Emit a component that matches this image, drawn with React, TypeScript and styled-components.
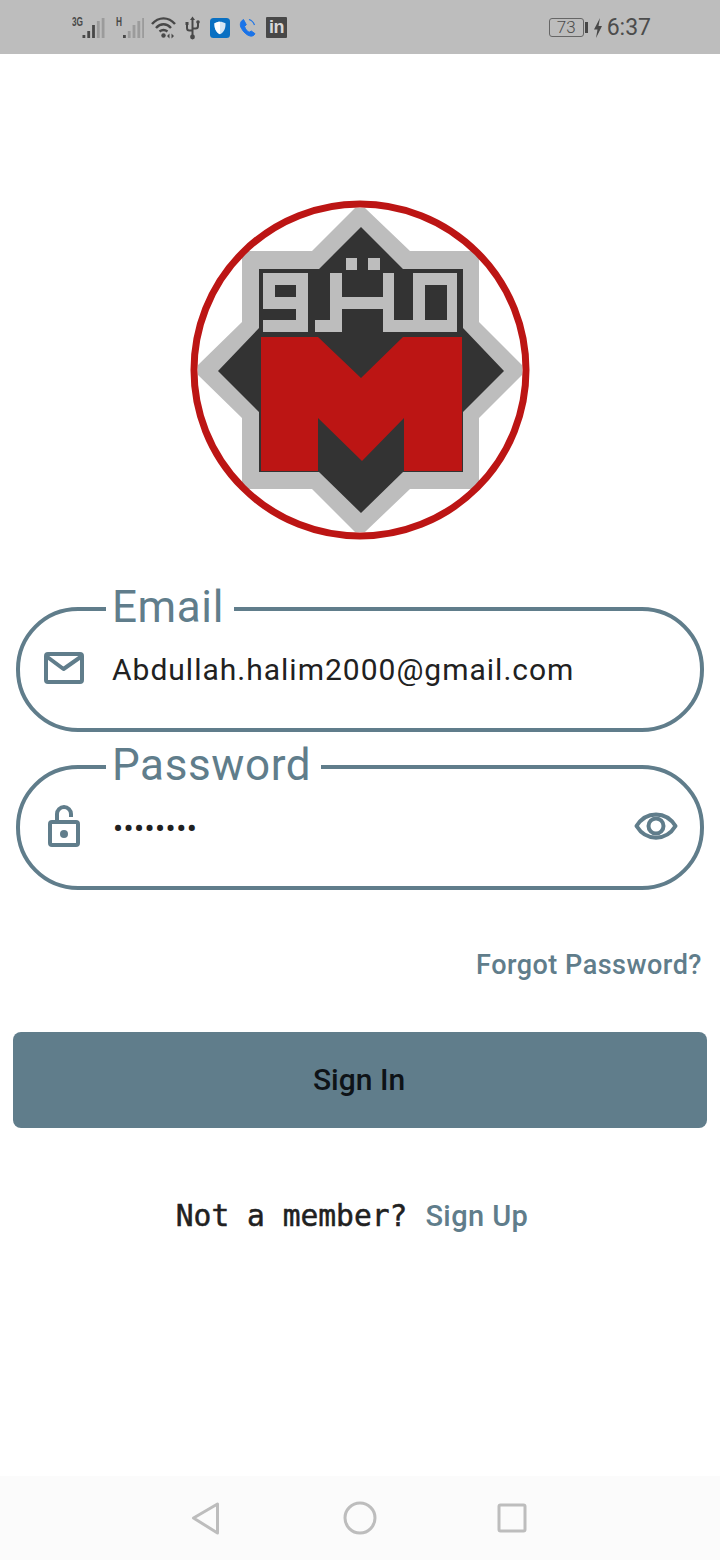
import styled, { createGlobalStyle } from 'styled-components'

const GlobalStyle = createGlobalStyle`
  html, body {
    margin: 0;
    padding: 0;
    background: #fff;
  }
  * {
    box-sizing: border-box;
  }
`

const Page = styled.div`
  width: 720px;
  height: 1560px;
  display: flex;
  flex-direction: column;
  overflow: hidden;
  background: #fff;
  font-family: Roboto, sans-serif;
`

const StatusBar = styled.header`
  height: 54px;
  flex: none;
  display: flex;
  align-items: center;
  justify-content: space-between;
  padding: 1px 69px 0 72px;
  background: #bdbdbd;
`

const StatusGroup = styled.div`
  display: flex;
  align-items: center;
  gap: 7px;
`

const StatusIcon = styled.svg`
  display: block;
  flex: none;
`

const LinkedIn = styled.span`
  width: 21px;
  height: 21px;
  display: flex;
  align-items: center;
  justify-content: center;
  border-radius: 1px;
  background: #484848;
  color: #d8d8d8;
  font-family: 'Liberation Sans', sans-serif;
  font-size: 18px;
  font-weight: 700;
  line-height: 23px;
  letter-spacing: -0.5px;
`

const Power = styled.div`
  display: flex;
  align-items: center;
`

const Battery = styled.span`
  width: 35px;
  height: 19px;
  display: flex;
  align-items: center;
  justify-content: center;
  border: 1.5px solid #666;
  border-radius: 3px;
  color: #4c4c4c;
  font-size: 17px;
  font-weight: 300;
  line-height: 1;
`

const BatteryNub = styled.span`
  width: 3px;
  height: 11px;
  margin: 0 6px 0 1px;
  background: #484848;
`

const Time = styled.span`
  margin-left: 5px;
  color: #4c4c4c;
  font-size: 23px;
  line-height: 28px;
`

const Logo = styled.svg`
  display: block;
  flex: none;
  margin: 136px auto 35px;
`

const Field = styled.fieldset`
  margin: 0 16px 11px;
  padding: 0 22px 24px 24px;
  min-width: 0;
  border: 4px solid #607d8b;
  border-radius: 62px;
`

const Label = styled.legend`
  margin-left: 62px;
  padding: 0 10px 3px 6px;
  color: #607d8b;
  font-size: 44px;
  line-height: 44px;
  letter-spacing: 0.6px;
`

const FieldRow = styled.div`
  height: 72px;
  display: flex;
  align-items: center;
`

const FieldIcon = styled.svg`
  display: block;
  flex: none;
  margin-right: 28px;
`

const Value = styled.span`
  flex: 1;
  padding-top: 4px;
  color: #212121;
  font-size: 30px;
  line-height: 40px;
  letter-spacing: 1px;
`

const Secret = styled(Value)`
  margin-left: 1px;
  padding-top: 6px;
  letter-spacing: 0.4px;
`

const EyeIcon = styled.svg`
  display: block;
  flex: none;
`

const Forgot = styled.a`
  align-self: flex-end;
  margin: 48px 18px 0 0;
  color: #607d8b;
  font-size: 27px;
  font-weight: 500;
  line-height: 32px;
  letter-spacing: 0.5px;
`

const SignInButton = styled.button`
  height: 96px;
  flex: none;
  margin: 51px 13px 0;
  padding: 0 2px 2px 0;
  border: 0;
  border-radius: 8px;
  background: #607d8b;
  color: #0e1317;
  font-family: Roboto, sans-serif;
  font-size: 30px;
  font-weight: 500;
`

const Footer = styled.div`
  height: 40px;
  flex: none;
  margin-top: 68px;
  padding-right: 16px;
  display: flex;
  align-items: center;
  justify-content: center;
  gap: 18px;
`

const Question = styled.span`
  color: #212121;
  font-family: 'DejaVu Sans Mono', monospace;
  font-size: 29.6px;
  -webkit-text-stroke: 0.5px #212121;
`

const SignUp = styled.a`
  color: #607d8b;
  font-size: 29px;
  font-weight: 500;
  letter-spacing: 0.4px;
`

const NavBar = styled.nav`
  height: 84px;
  flex: none;
  margin-top: auto;
  display: flex;
  align-items: center;
  justify-content: center;
  gap: 116px;
  background: #fbfbfb;
`

const NavIcon = styled.svg`
  display: block;
  fill: none;
  stroke: #bdbdbd;
  stroke-width: 3;
  stroke-linejoin: round;
`

function SignalIcon({ label, width, labelX, start, dark }: { label: string; width: number; labelX: number; start: number; dark: number }) {
  const heights = [3, 7, 13, 17, 20]
  return (
    <StatusIcon width={width} height={24} viewBox={`0 0 ${width} 24`}>
      <text
        x={labelX}
        y={10}
        fontFamily="'Liberation Sans', sans-serif"
        fontSize="12"
        fontWeight="700"
        fill="#484848"
        textLength={label.length > 1 ? 11 : 6}
        lengthAdjust="spacingAndGlyphs"
      >
        {label}
      </text>
      {heights.map((h, i) => (
        <rect key={i} x={start + i * 4.8} y={22 - h} width={2.8} height={h} fill={i < dark ? '#484848' : '#9b9b9b'} />
      ))}
    </StatusIcon>
  )
}

export default function App() {
  return (
    <Page>
      <GlobalStyle />
      <StatusBar>
        <StatusGroup>
          <SignalIcon label="3G" width={35} labelX={0} start={10.5} dark={3} />
          <SignalIcon label="H" width={30} labelX={2} start={9} dark={1} />
          <StatusIcon width={26} height={24} viewBox="0 0 26 24" fill="none" stroke="#484848" strokeWidth="2.4">
            <path d="M1 8C7.500 0.500 17.500 0.500 24 8" />
            <path d="M5 12C9.500 7 15.500 7 20 12" />
            <path d="M8.500 15.500C11 13.500 14 13.500 16.500 15.500" />
            <circle cx="12.500" cy="19.500" r="2.200" fill="#484848" stroke="none" />
            <path d="M18.500 17.500l-2.500 2.500 2.500 2.500zM20.500 17.500l2.500 2.500-2.500 2.500z" fill="#484848" stroke="none" />
          </StatusIcon>
          <StatusIcon width={19} height={24} viewBox="0 0 19 24" fill="none" stroke="#484848" strokeWidth="2">
            <path d="M8.500 3v18" />
            <path d="M3 8v4c0 1.500 1 2.500 2.500 2.500H8.500M14 6.500v3.500c0 1.500-1 2.500-2.500 2.500H8.500" />
            <path d="M8.500 0.500l2.500 3.500H6z" fill="#484848" stroke="none" />
            <rect x="1.500" y="6" width="3" height="3" fill="#484848" stroke="none" />
            <circle cx="14" cy="6" r="1.800" fill="#484848" stroke="none" />
            <circle cx="8.500" cy="21" r="2.400" fill="#484848" stroke="none" />
          </StatusIcon>
          <StatusIcon width={20} height={20} viewBox="0 0 20 20">
            <rect width="20" height="20" rx="3.500" fill="#0a70c2" />
            <path d="M10 3.800c1.800 0 3.800.6 5.500 1.500 .2 5.200-1.500 9-5.500 11-4-2-5.700-5.800-5.500-11 1.700-.9 3.700-1.500 5.500-1.500z" fill="#d5e6f3" />
            <path d="M10 3.800c-1.800 0-3.800.6-5.500 1.500-.2 5.200 1.500 9 5.500 11z" fill="#fff" />
          </StatusIcon>
          <StatusIcon width={22} height={22} viewBox="0 0 22 22" fill="none">
            <path d="M6.500 2.500C3 4.500 2.500 8 4.500 11.500c2 3.500 5 6.500 8.500 7.500 2.300 .5 4-.5 5-2.300l-3.700-2.700-2.200 1.300c-2-1-3.700-3.200-4.500-5.800l1.700-1.800z" fill="#1a73e8" stroke="#1a73e8" strokeWidth="1" strokeLinejoin="round" />
            <path d="M12 2.500c2.500.8 4.500 2.800 5.500 5.500" stroke="#1a73e8" strokeWidth="1.200" />
          </StatusIcon>
          <LinkedIn>in</LinkedIn>
        </StatusGroup>
        <StatusGroup>
          <Power>
            <Battery>73</Battery>
            <BatteryNub />
            <StatusIcon width={8} height={20} viewBox="0 0 8 20">
              <path d="M6 0L0 11.500H3.500L2 20 8 8H4.500z" fill="#484848" />
            </StatusIcon>
            <Time>6:37</Time>
          </Power>
        </StatusGroup>
      </StatusBar>

      <Logo width={360} height={360} viewBox="0 0 360 360">
        <path
          d="M175 18H185L230 61H299V132L342 175V185L299 228V299H230L185 342H175L132 299H62V228L18 185V175L62 132V61H132Z"
          fill="#bdbdbd"
        />
        <path
          d="M181 37L223 79H283V138L324 181L283 222V282H223L181 323L139 282H79V222L38 181L79 138V79H139Z"
          fill="#333"
        />
        <path
          d="M81 147H138L181 188L223 147H282V281H224V228L182 271L138 228V281H81Z"
          fill="#bc1514"
        />
        <g fill="#bdbdbd" fillRule="evenodd">
          <path d="M83 83H128V142H83V130H116V119H83ZM95 95V107H116V95Z" />
          <path d="M150 83H162V107H203V119H162V142H135V130H150Z" />
          <path d="M203 83H214V130H233V83H277V142H203ZM245 95V130H267V95Z" />
          <rect x="166" y="68" width="11" height="12" />
          <rect x="188" y="68" width="12" height="12" />
        </g>
        <circle cx="180" cy="180" r="166" fill="none" stroke="#bc1514" strokeWidth="7" />
      </Logo>

      <Field>
        <Label>Email</Label>
        <FieldRow>
          <FieldIcon width={40} height={32} viewBox="0 0 40 32" fill="none" stroke="#607d8b" strokeWidth="4" strokeLinejoin="round">
            <rect x="2" y="2" width="36" height="28" rx="2" />
            <path d="M2 4L19.500 17L38 4" />
          </FieldIcon>
          <Value>Abdullah.halim2000@gmail.com</Value>
        </FieldRow>
      </Field>

      <Field>
        <Label>Password</Label>
        <FieldRow>
          <FieldIcon width={40} height={42} viewBox="0 0 40 42" fill="none" stroke="#607d8b" strokeWidth="4" strokeLinejoin="round">
            <rect x="6" y="17" width="28" height="23" rx="2" />
            <path d="M13 17V9A7 7 0 0 1 27 9V12" />
            <circle cx="20" cy="29" r="4" fill="#607d8b" stroke="none" />
          </FieldIcon>
          <Secret>••••••••</Secret>
          <EyeIcon width={44} height={30} viewBox="0 0 44 30" fill="none" stroke="#607d8b" strokeWidth="4">
            <path d="M2.500 15C12 -0.500 32 -0.500 41.500 15C32 30.500 12 30.500 2.500 15Z" strokeLinejoin="round" />
            <circle cx="22" cy="15" r="7.500" />
          </EyeIcon>
        </FieldRow>
      </Field>

      <Forgot>Forgot Password?</Forgot>
      <SignInButton>Sign In</SignInButton>

      <Footer>
        <Question>Not a member?</Question>
        <SignUp>Sign Up</SignUp>
      </Footer>

      <NavBar>
        <NavIcon width={36} height={36} viewBox="0 0 36 36">
          <path d="M3.500 18L27.500 4V33Z" />
        </NavIcon>
        <NavIcon width={36} height={36} viewBox="0 0 36 36">
          <circle cx="18" cy="18" r="15" />
        </NavIcon>
        <NavIcon width={36} height={36} viewBox="0 0 36 36">
          <rect x="5" y="5" width="26" height="26" rx="1.500" />
        </NavIcon>
      </NavBar>
    </Page>
  )
}
